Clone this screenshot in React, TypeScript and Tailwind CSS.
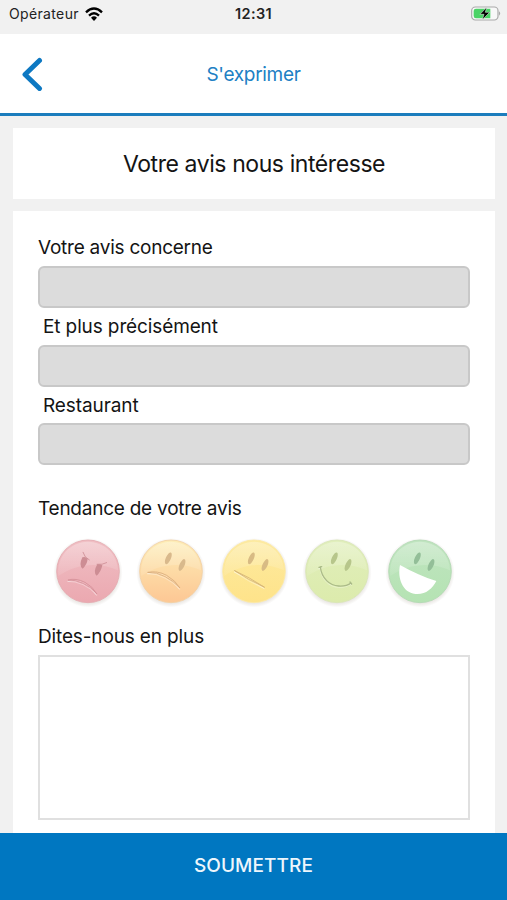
import React from "react";

type Mood = "angry" | "sad" | "neutral" | "happy" | "laughing";

type FaceProps = {
  mood: Mood;
  from: string;
  to: string;
  border: string;
  eye: string;
  mouth: string;
};

const faces: FaceProps[] = [
  { mood: "angry", from: "#f0bfc4", to: "#eba8b0", border: "#e5aab0", eye: "#cd8d94", mouth: "#d58f97" },
  { mood: "sad", from: "#fdedb6", to: "#fdc794", border: "#f3d0a2", eye: "#d9b98c", mouth: "#d9ac7c" },
  { mood: "neutral", from: "#fdea9f", to: "#fee38a", border: "#fce9a6", eye: "#d8bb84", mouth: "#d3b277" },
  { mood: "happy", from: "#e0eebb", to: "#dcebac", border: "#d9e6b6", eye: "#b7c68b", mouth: "#abbb88" },
  { mood: "laughing", from: "#bfe4bf", to: "#b5e3b3", border: "#b2d9b3", eye: "#93be98", mouth: "#ffffff" },
];

const mouthPaths: Record<Mood, string> = {
  angry: "M70 150 Q92 143 120 157 Q143 169 156 192 Q138 170 115 160 Q91 149 70 150Z",
  sad: "M60 127 Q88 121 116 136 Q143 152 156 174 Q136 152 112 140 Q87 126 60 127Z",
  neutral: "M71 122 Q114 141 161 172 Q110 149 71 122Z",
  happy: "M75 112 L83 110 M79 111 C83 145 107 167 134 168 C149 169 163 165 171 159 M168 156 L173 162",
  laughing: "M69 105 C61 145 76 187 115 192 C145 195 165 177 178 153 C142 142 107 126 69 105Z",
};

function Mouth({ mood, color }: { mood: Mood; color: string }) {
  if (mood === "laughing") {
    return <path d={mouthPaths[mood]} fill={color} />;
  }
  return (
    <g fill="none" strokeLinecap="round">
      <path d={mouthPaths[mood]} stroke="#fff" strokeOpacity="0.35" strokeWidth="3" transform="translate(-1 4)" />
      <path d={mouthPaths[mood]} stroke={color} strokeWidth={mood === "happy" ? 4 : 2.5} />
    </g>
  );
}

function Face({ mood, from, to, border, eye, mouth }: FaceProps) {
  return (
    <svg viewBox="0 0 249 249" className="h-[83px] w-[83px] overflow-visible">
      <defs>
        <linearGradient id={`face-${mood}`} x1="0" y1="0" x2="0" y2="1">
          <stop offset="0" stopColor={from} />
          <stop offset="1" stopColor={to} />
        </linearGradient>
        <linearGradient id={`shine-${mood}`} x1="0" y1="0" x2="0" y2="1">
          <stop offset="0" stopColor="#fff" stopOpacity="0.3" />
          <stop offset="1" stopColor="#fff" stopOpacity="0.08" />
        </linearGradient>
        <radialGradient id={`shadow-${mood}`}>
          <stop offset="0.88" stopColor="#8a7b6a" stopOpacity="0.18" />
          <stop offset="1" stopColor="#8a7b6a" stopOpacity="0" />
        </radialGradient>
      </defs>
      <circle cx="129" cy="128" r="104" fill={`url(#shadow-${mood})`} />
      <circle cx="129" cy="124" r="94" fill={`url(#face-${mood})`} stroke={border} strokeWidth="2.5" />
      <path d="M40 138 C34 80 74 36 129 35 C180 36 218 74 219 121 C160 95 94 101 40 138Z" fill={`url(#shine-${mood})`} />
      {mood === "angry" ? (
        <>
          <path d="M112 82 Q121 78 128 87 Q126 104 113 116 Q100 108 112 82Z M157 103 Q165 101 172 106 Q168 126 155 137 Q143 127 157 103Z" fill={eye} />
          <path d="M114 67 Q118 83 133 90 M156 103 Q172 105 185 98" fill="none" stroke={eye} strokeWidth="2.5" strokeLinecap="round" />
        </>
      ) : (
        <g fill={eye}>
          <ellipse cx="121" cy="85" rx="7.5" ry="19" transform="rotate(24 121 85)" />
          <ellipse cx="162" cy="105" rx="7.5" ry="19" transform="rotate(24 162 105)" />
        </g>
      )}
      <Mouth mood={mood} color={mouth} />
    </svg>
  );
}

function StatusBar() {
  return (
    <div className="grid h-[34px] shrink-0 grid-cols-3 items-center bg-[#f1f1f1] pb-[7px] text-[#222]">
      <div className="flex items-center gap-[6px] pl-[9px]">
        <span className="text-[14px] tracking-[0.35px]">Opérateur</span>
        <svg viewBox="0 0 54 42" className="h-[14px] w-[18px]" fill="none" stroke="#000" strokeWidth="7">
          <path d="M3 16 Q27 -7 51 16" />
          <path d="M12 26 Q27 12 42 26" />
          <path d="M18 32 Q27 24 36 32 L27 42Z" fill="#000" stroke="none" />
        </svg>
      </div>
      <span className="text-center text-[14.5px] font-semibold tracking-[0.4px]">12:31</span>
      <svg viewBox="0 0 90 45" className="mr-[6.5px] h-[15px] w-[30px] justify-self-end">
        <rect x="2" y="3" width="79" height="39" rx="11" fill="#f8f8f8" stroke="#a9a9a9" strokeWidth="3.5" />
        <path d="M15 8 H58 V37 H15 Q8 37 8 30 V15 Q8 8 15 8Z" fill="#4bd366" />
        <path d="M84 16 Q91 22 84 29Z" fill="#a9a9a9" />
        <path d="M47 4 L27 25 H39 L34 41 L56 19 H43Z" fill="#000" stroke="#f5f5f5" strokeWidth="1.5" />
      </svg>
    </div>
  );
}

function Header() {
  return (
    <header className="grid h-[82px] shrink-0 grid-cols-3 items-center border-b-[3px] border-[#1b7dbd] bg-white">
      <button type="button" aria-label="Retour" className="w-fit pl-[20.5px]">
        <svg viewBox="0 0 22 34" className="h-[34px] w-[22px]" fill="none" stroke="#0d78c2" strokeWidth="5" strokeLinecap="round" strokeLinejoin="round">
          <path d="M18.5 3.5 L4 17.5 L18.5 31.5" />
        </svg>
      </button>
      <h1 className="pt-[3px] text-center text-[19px] tracking-[-0.3px] text-[#2080c4]">S'exprimer</h1>
    </header>
  );
}

function Field({ label, className }: { label: string; className: string }) {
  return (
    <label className="block">
      <span className={className}>{label}</span>
      <input disabled className="block h-[42px] w-full rounded-[6px] border-2 border-[#c8c8c8] bg-[#dcdcdc] px-3" />
    </label>
  );
}

export default function App() {
  return (
    <div className="flex h-[900px] w-full flex-col overflow-hidden bg-[#f1f1f1] font-['Inter','Liberation_Sans',sans-serif] text-[#141414]">
      <StatusBar />
      <Header />
      <main className="flex min-h-0 flex-1 flex-col gap-3 px-[13px] pt-3 pr-3">
        <div className="flex h-[71px] shrink-0 items-center justify-center bg-white pt-[2px]">
          <h2 className="text-[23px] tracking-[-0.42px]">Votre avis nous intéresse</h2>
        </div>
        <form className="flex-1 bg-white px-[25px] pt-[19px]">
          <Field label="Votre avis concerne" className="block h-9 text-[19px] leading-9 tracking-[-0.24px]" />
          <Field label="Et plus précisément" className="block h-[37px] pl-[5px] text-[19px] leading-[38px] tracking-[-0.12px]" />
          <Field label="Restaurant" className="block h-[36px] pl-[5px] text-[19px] leading-[38px] tracking-[-0.1px]" />
          <p className="mt-[25px] h-[40px] text-[19px] leading-[38px] tracking-[-0.24px]">Tendance de votre avis</p>
          <div className="ml-[7px] flex h-[83px]">
            {faces.map((face) => (
              <Face key={face.mood} {...face} />
            ))}
          </div>
          <label className="mt-[5px] block">
            <span className="block h-[37px] text-[19px] leading-[38px] tracking-[-0.14px]">Dites-nous en plus</span>
            <textarea className="block h-[165px] w-full resize-none border-2 border-[#e0e0e0] bg-white p-2" />
          </label>
        </form>
      </main>
      <button type="submit" className="h-[67px] shrink-0 bg-[#0077c1] text-[19px] font-medium tracking-[0.1px] text-[#eef6fc]">
        SOUMETTRE
      </button>
    </div>
  );
}
